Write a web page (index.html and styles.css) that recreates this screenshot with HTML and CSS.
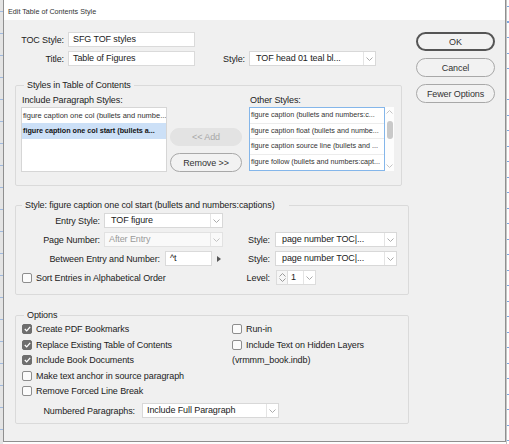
FILE: index.html
```html
<!DOCTYPE html>
<html>
<head>
<meta charset="utf-8">
<title>Edit Table of Contents Style</title>
<link rel="stylesheet" href="styles.css">
</head>
<body>
<div class="dialog">
  <div class="titlebar">Edit Table of Contents Style</div>
  <div class="dbody">
    <div class="main">
      <div class="trow">
        <span class="lbl toplbl">TOC Style:</span>
        <div class="field topfield">SFG TOF styles</div>
      </div>
      <div class="trow">
        <span class="lbl toplbl">Title:</span>
        <div class="field topfield">Table of Figures</div>
        <span class="lbl stylelbl">Style:</span>
        <div class="dd topdd"><span class="ddtext">TOF head 01 teal bl...</span><span class="ddarr"><svg width="7" height="4" viewBox="0 0 7 4"><path d="M0.5 0.5 L3.5 3.5 L6.5 0.5" fill="none" stroke="#ababab" stroke-width="1"/></svg></span></div>
      </div>

      <fieldset class="grp g1">
        <legend class="leg leg1">Styles in Table of Contents</legend>
        <div class="g1row">
          <div class="col1">
            <div class="sublbl">Include Paragraph Styles:</div>
            <div class="list l1">
              <div class="li">figure caption one col (bullets and numbe...</div>
              <div class="li sel">figure caption one col start (bullets a...</div>
            </div>
          </div>
          <div class="midbtns">
            <div class="pill dis">&lt;&lt; Add</div>
            <div class="pill remove">Remove &gt;&gt;</div>
          </div>
          <div class="col3">
            <div class="sublbl">Other Styles:</div>
            <div class="listwrap">
              <div class="list l2">
                <div class="li sep">figure caption (bullets and numbers:c...</div>
                <div class="li sep">figure caption float (bullets and numbe...</div>
                <div class="li sep">figure caption source line (bullets and ...</div>
                <div class="li">figure follow (bullets and numbers:capt...</div>
              </div>
              <div class="sbar">
                <svg class="sbup" width="7" height="4" viewBox="0 0 7 4"><path d="M0.5 3.5 L3.5 0.5 L6.5 3.5" fill="none" stroke="#c4c4c4" stroke-width="1"/></svg>
                <div class="thumb"></div>
                <svg class="sbdown" width="7" height="4" viewBox="0 0 7 4"><path d="M0.5 0.5 L3.5 3.5 L6.5 0.5" fill="none" stroke="#c4c4c4" stroke-width="1"/></svg>
              </div>
            </div>
          </div>
        </div>
      </fieldset>

      <fieldset class="grp g2">
        <legend class="leg leg2">Style: figure caption one col start (bullets and numbers:captions)</legend>
        <div class="g2grid">
          <div class="lrow">
            <span class="lbl w79">Entry Style:</span>
            <div class="dd w119"><span class="ddtext">TOF figure</span><span class="ddarr"><svg width="7" height="4" viewBox="0 0 7 4"><path d="M0.5 0.5 L3.5 3.5 L6.5 0.5" fill="none" stroke="#ababab" stroke-width="1"/></svg></span></div>
          </div>
          <div></div>
          <div></div>

          <div class="lrow">
            <span class="lbl w79">Page Number:</span>
            <div class="dd w119 disabled"><span class="ddtext pad4">After Entry</span><span class="ddarr"><svg width="7" height="4" viewBox="0 0 7 4"><path d="M0.5 0.5 L3.5 3.5 L6.5 0.5" fill="none" stroke="#c2c2c2" stroke-width="1"/></svg></span></div>
          </div>
          <span class="lbl rlbl">Style:</span>
          <div class="dd"><span class="ddtext">page number TOC|...</span><span class="ddarr"><svg width="7" height="4" viewBox="0 0 7 4"><path d="M0.5 0.5 L3.5 3.5 L6.5 0.5" fill="none" stroke="#ababab" stroke-width="1"/></svg></span></div>

          <div class="lrow">
            <span class="lbl w139">Between Entry and Number:</span>
            <div class="field w47">^t</div>
            <span class="tri"></span>
          </div>
          <span class="lbl rlbl">Style:</span>
          <div class="dd"><span class="ddtext">page number TOC|...</span><span class="ddarr"><svg width="7" height="4" viewBox="0 0 7 4"><path d="M0.5 0.5 L3.5 3.5 L6.5 0.5" fill="none" stroke="#ababab" stroke-width="1"/></svg></span></div>

          <div class="lrow">
            <span class="cb"></span><span class="cblbl">Sort Entries in Alphabetical Order</span>
          </div>
          <span class="lbl rlbl">Level:</span>
          <div class="level">
            <div class="spin">
              <svg width="7" height="4" viewBox="0 0 7 4"><path d="M0.5 3.5 L3.5 0.5 L6.5 3.5" fill="none" stroke="#9a9a9a" stroke-width="1"/></svg>
              <svg width="7" height="4" viewBox="0 0 7 4"><path d="M0.5 0.5 L3.5 3.5 L6.5 0.5" fill="none" stroke="#9a9a9a" stroke-width="1"/></svg>
            </div>
            <div class="lvfield">1</div>
            <span class="ddarr"><svg width="7" height="4" viewBox="0 0 7 4"><path d="M0.5 0.5 L3.5 3.5 L6.5 0.5" fill="none" stroke="#ababab" stroke-width="1"/></svg></span>
          </div>
        </div>
      </fieldset>

      <fieldset class="grp g3">
        <legend class="leg leg3">Options</legend>
        <div class="optcols">
          <div class="optcol left">
            <div class="orow"><span class="cb on"><svg width="7" height="6" viewBox="0 0 7 6"><path d="M0.8 3 L2.7 4.9 L6.2 0.9" fill="none" stroke="#fff" stroke-width="1.3"/></svg></span><span class="cblbl">Create PDF Bookmarks</span></div>
            <div class="orow"><span class="cb on"><svg width="7" height="6" viewBox="0 0 7 6"><path d="M0.8 3 L2.7 4.9 L6.2 0.9" fill="none" stroke="#fff" stroke-width="1.3"/></svg></span><span class="cblbl">Replace Existing Table of Contents</span></div>
            <div class="orow"><span class="cb on"><svg width="7" height="6" viewBox="0 0 7 6"><path d="M0.8 3 L2.7 4.9 L6.2 0.9" fill="none" stroke="#fff" stroke-width="1.3"/></svg></span><span class="cblbl">Include Book Documents</span></div>
            <div class="orow"><span class="cb"></span><span class="cblbl">Make text anchor in source paragraph</span></div>
            <div class="orow"><span class="cb"></span><span class="cblbl">Remove Forced Line Break</span></div>
          </div>
          <div class="optcol right">
            <div class="orow"><span class="cb"></span><span class="cblbl">Run-in</span></div>
            <div class="orow"><span class="cb"></span><span class="cblbl">Include Text on Hidden Layers</span></div>
            <div class="orow"><span class="booktxt">(vrmmm_book.indb)</span></div>
          </div>
        </div>
        <div class="numrow">
          <span class="lbl w114">Numbered Paragraphs:</span>
          <div class="dd w137"><span class="ddtext pad4">Include Full Paragraph</span><span class="ddarr"><svg width="7" height="4" viewBox="0 0 7 4"><path d="M0.5 0.5 L3.5 3.5 L6.5 0.5" fill="none" stroke="#ababab" stroke-width="1"/></svg></span></div>
        </div>
      </fieldset>
    </div>

    <div class="side">
      <div class="pill big ok">OK</div>
      <div class="pill big">Cancel</div>
      <div class="pill big">Fewer Options</div>
    </div>
  </div>
</div>
</body>
</html>
```

FILE: styles.css
```css
* { box-sizing: border-box; }
html, body { margin: 0; padding: 0; }

body {
  width: 509px;
  height: 444px;
  overflow: hidden;
  font-family: "Liberation Sans", Arial, sans-serif;
  font-size: 9px;
  letter-spacing: -0.1px;
  color: #222;
  background:
    repeating-linear-gradient(to bottom, transparent 0 6px, #7ea8df 6px 7px, transparent 7px 15.5px) 507px 0 / 2px 100% no-repeat,
    linear-gradient(#c4c4c4, #c4c4c4) 506px 0 / 1px 100% no-repeat,
    repeating-linear-gradient(to bottom, transparent 0 11px, #9fb9de 11px 12px, transparent 12px 22px) 0 0 / 3px 100% no-repeat,
    linear-gradient(to right, #e4e4e4 0 3px, #fdfdfd 3px);
}

.dialog {
  margin-left: 3px;
  width: 503px;
  height: 442px;
  background: #f0f0f0;
  border: 1px solid #8f8f8f;
  border-top: 0;
  display: flex;
  flex-direction: column;
}

.titlebar {
  height: 20px;
  flex: none;
  background: #fff;
  padding: 3px 0 0 4px;
  font-size: 7.2px;
  letter-spacing: 0;
  color: #333;
  display: flex;
  align-items: center;
}

.dbody {
  flex: 1;
  display: flex;
  padding: 12px 10px 0 11px;
  gap: 7px;
}

.main {
  width: 394px;
  display: flex;
  flex-direction: column;
}

.side {
  width: 79px;
  display: flex;
  flex-direction: column;
  gap: 7px;
}

/* generic */
.lbl { flex: none; text-align: right; white-space: nowrap; }

.trow { display: flex; align-items: center; height: 15px; }
.trow + .trow { margin-top: 4px; }
.toplbl { width: 49px; margin-right: 4px; }
.topfield { width: 127px; }
.stylelbl { width: 50px; margin-right: 4px; }
.topdd { width: 127px; }

.field {
  height: 15px;
  background: #fff;
  border: 1px solid #dadada;
  padding-left: 4px;
  line-height: 13px;
  white-space: nowrap;
  overflow: hidden;
  flex: none;
}

.dd {
  display: flex;
  height: 15px;
  background: #fff;
  border: 1px solid #d8d8d8;
  flex: none;
}
.ddtext {
  flex: 1;
  padding-left: 6px;
  line-height: 13px;
  white-space: nowrap;
  overflow: hidden;
}
.ddtext.pad4 { padding-left: 4px; }
.ddarr {
  width: 12px;
  flex: none;
  border-left: 1px solid #e4e4e4;
  display: flex;
  align-items: center;
  justify-content: center;
}
.dd.disabled { background: #f9f9f9; border-color: #e2e2e2; }
.dd.disabled .ddtext { color: #9a9a9a; }

/* group boxes */
.grp {
  margin: 0;
  border: 1px solid #dadada;
  border-radius: 2px;
  min-inline-size: 0;
}
.leg {
  line-height: 10px;
  padding: 0 3px;
  white-space: nowrap;
}

.g1 { width: 387px; margin-top: 14px; padding: 4px 5px 13px 5px; }
.leg1 { margin-left: 3px; }

.g1row { display: flex; }
.sublbl { height: 12px; line-height: 12px; margin-bottom: 1px; padding-left: 1px; white-space: nowrap; }
.col1 { width: 146px; margin-right: 3px; }
.col3 { flex: 1; margin-left: 7px; }

.list {
  background: #fff;
  overflow: hidden;
}
.l1 { height: 65px; border: 1px solid #d6d6d6; }
.l2 { height: 64px; width: 136px; border: 1px solid #84b6ea; }
.li {
  height: 15px;
  line-height: 15px;
  padding-left: 1px;
  font-size: 7.5px;
  letter-spacing: 0;
  color: #333;
  white-space: nowrap;
  overflow: hidden;
}
.l2 .li { height: 15.5px; line-height: 14.5px; font-size: 7.2px; }
.li.sep { border-bottom: 1px solid #ececec; }
.li.sel {
  background: #cce0f7;
  font-weight: bold;
  font-size: 7.2px;
  color: #111;
  height: 15.5px;
}

.listwrap { display: flex; }
.sbar {
  width: 9px;
  height: 64px;
  background: #fdfdfd;
  display: flex;
  flex-direction: column;
  align-items: center;
  padding-top: 3px;
}
.sbar .thumb {
  width: 6px;
  height: 18px;
  margin-top: 7px;
  border-radius: 3px;
  background: #c9c9c9;
}
.sbar .sbdown { margin-top: auto; margin-bottom: 3px; }

.midbtns {
  width: 72px;
  display: flex;
  flex-direction: column;
  justify-content: flex-end;
  gap: 7px;
}

.pill {
  display: flex;
  align-items: center;
  justify-content: center;
  border-radius: 10px;
  border: 1px solid #a8a8a8;
  background: #f2f2f2;
  color: #333;
  white-space: nowrap;
}
.pill.dis { height: 18px; border-color: #e3e3e3; background: #e3e3e3; color: #a8a8a8; }
.pill.remove { height: 19px; }
.pill.big { height: 19px; width: 79px; }
.pill.ok { border: 2px solid #555; }

/* group 2 */
.g2 { width: 394px; margin-top: 14px; padding: 3px 5px 9px 5px; }
.leg2 { margin-left: 1px; padding-right: 14px; }
.g2grid {
  display: grid;
  grid-template-columns: 222px 32px 122px;
  grid-template-rows: 15px 15px 15px 15px;
  row-gap: 4px;
  align-items: center;
}
.lrow { display: flex; align-items: center; height: 15px; }
.w79 { width: 79px; margin-right: 4px; }
.w119 { width: 119px; }
.w139 { width: 139px; margin-right: 5px; }
.w47 { width: 47px; padding-left: 4px; }
.rlbl { padding-right: 5px; }
.tri {
  width: 0;
  height: 0;
  margin-left: 5px;
  border-top: 3px solid transparent;
  border-bottom: 3px solid transparent;
  border-left: 4px solid #555;
}

.cb {
  width: 10px;
  height: 10px;
  flex: none;
  margin-left: 1px;
  margin-right: 4px;
  border: 1px solid #8d8d8d;
  border-radius: 2px;
  background: #fbfbfb;
  display: flex;
  align-items: center;
  justify-content: center;
}
.cb.on { background: #6e6e6e; border-color: #6e6e6e; }
.cblbl { white-space: nowrap; }

.level {
  display: flex;
  width: 40px;
  height: 15px;
  margin-left: 1px;
  border: 1px solid #dcdcdc;
  background: #fff;
}
.spin {
  width: 11px;
  flex: none;
  background: #f6f6f6;
  border-right: 1px solid #dcdcdc;
  display: flex;
  flex-direction: column;
  align-items: center;
  justify-content: space-around;
  padding: 1px 0;
}
.lvfield { flex: 1; padding-left: 3px; line-height: 13px; }

/* group 3 */
.g3 { width: 394px; margin-top: 15px; padding: 1.5px 5px 5px 5px; }
.leg3 { margin-left: 3px; }
.optcols { display: flex; }
.optcol.left { width: 211px; }
.optcol.right { flex: 1; }
.optcol.right .cb { margin-left: 0; }
.orow { display: flex; align-items: center; height: 15.5px; }
.booktxt { white-space: nowrap; }

.numrow { display: flex; align-items: center; height: 15px; margin-top: 4px; }
.w114 { width: 114px; margin-right: 7px; }
.w137 { width: 137px; }
```
